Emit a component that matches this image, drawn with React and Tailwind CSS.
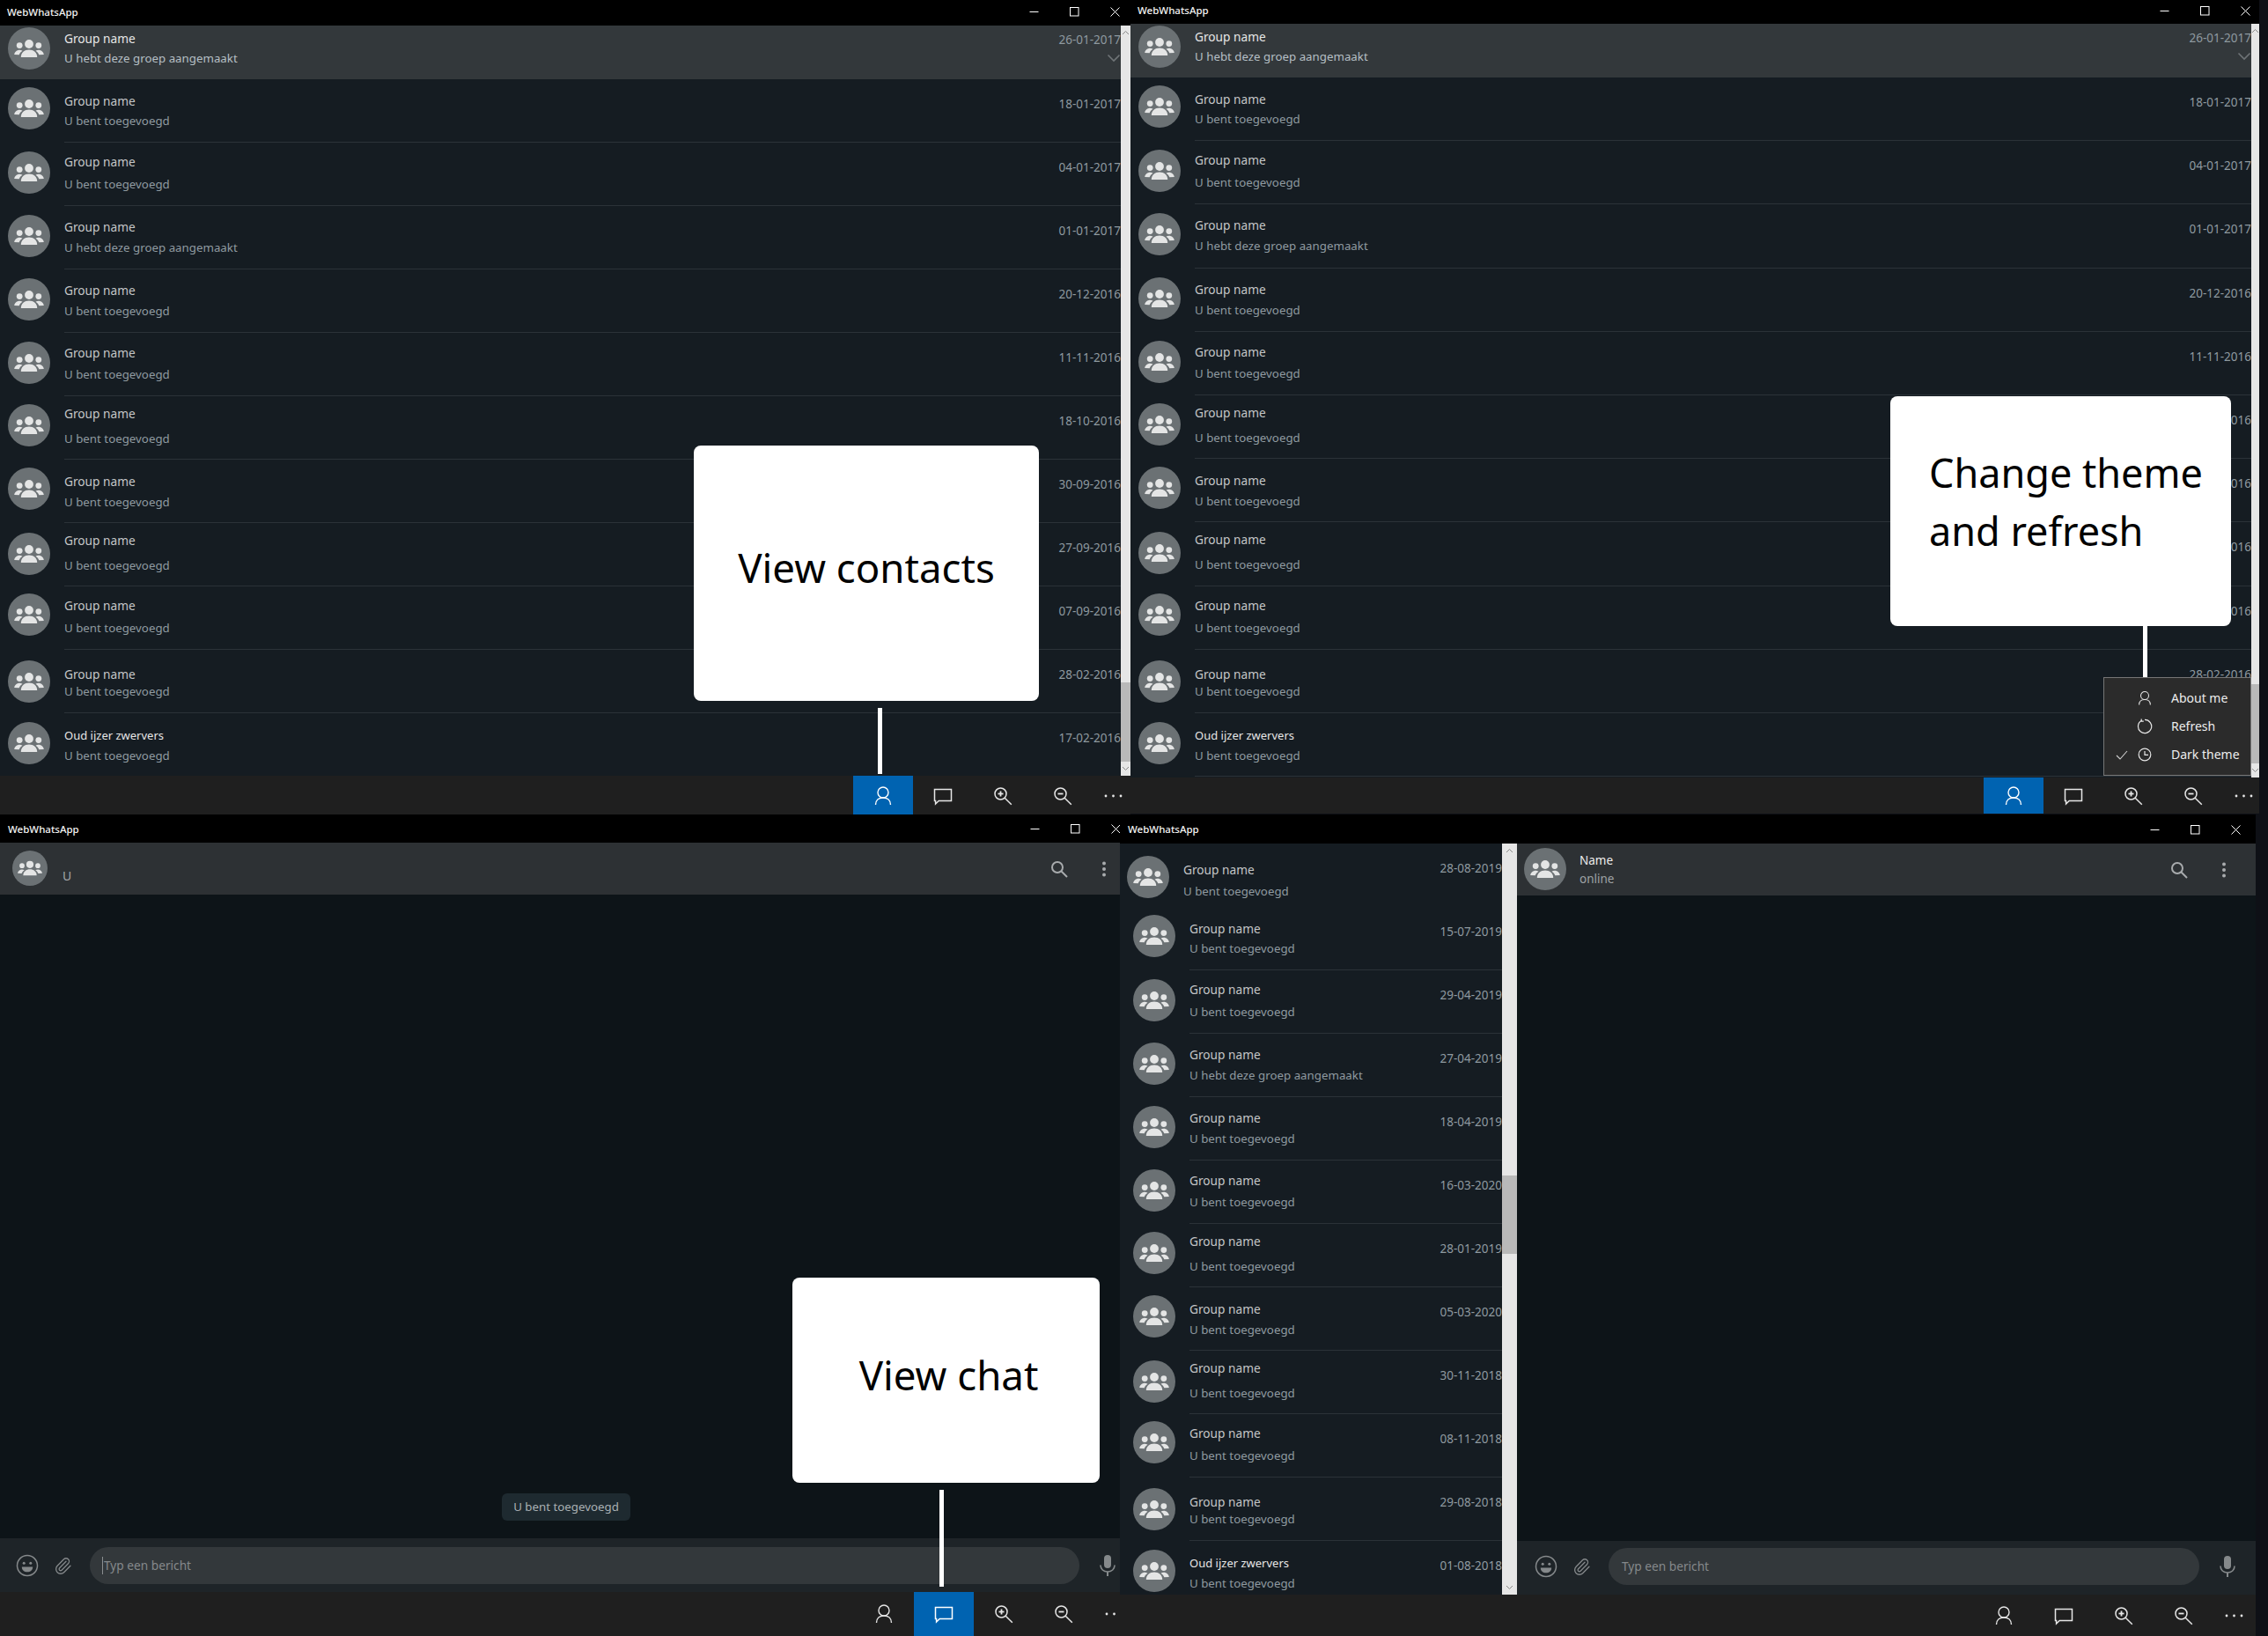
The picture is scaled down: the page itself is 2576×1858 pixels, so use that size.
import React from "react";
import { Paperclip } from "lucide-react";

const FONT = "[font-family:'Noto_Sans','Open_Sans',sans-serif]";

function GroupAvatar({ className = "w-12 h-12" }) {
  return (
    <svg viewBox="0 0 48 48" className={`shrink-0 ${className}`}>
      <circle cx="24" cy="24" r="24" fill="#6b7174" />
      <circle cx="24" cy="19" r="4.9" fill="#e4e5e5" />
      <circle cx="13.2" cy="20.6" r="3.4" fill="#e4e5e5" />
      <circle cx="34.8" cy="20.6" r="3.4" fill="#e4e5e5" />
      <path d="M14.8 34c0-5.2 4-8.4 9.2-8.4s9.2 3.2 9.2 8.4z" fill="#e4e5e5" />
      <path d="M7.2 31c.5-3 3-5.2 6-5.2 1.3 0 2.4.3 3.3.9-1.9 1.1-3.2 2.6-3.8 4.6z" fill="#e4e5e5" />
      <path d="M40.8 31c-.5-3-3-5.2-6-5.2-1.3 0-2.4.3-3.3.9 1.9 1.1 3.2 2.6 3.8 4.6z" fill="#e4e5e5" />
    </svg>
  );
}

function WinControls({ className }) {
  const cell = "w-[46px] flex justify-center shrink-0";
  return (
    <div className={`flex items-center ${className}`}>
      <div className={cell}>
        <svg width="11" height="11" viewBox="0 0 11 11"><path d="M0.5 5.5h10" stroke="#fff" strokeWidth="1" /></svg>
      </div>
      <div className={cell}>
        <svg width="11" height="11" viewBox="0 0 11 11"><rect x="0.5" y="0.5" width="9.5" height="9.5" fill="none" stroke="#fff" strokeWidth="1" /></svg>
      </div>
      <div className={cell}>
        <svg width="11" height="11" viewBox="0 0 11 11"><path d="M.5.5l10 10M10.5.5l-10 10" stroke="#fff" strokeWidth="1" /></svg>
      </div>
    </div>
  );
}

function TitleBar({ h, pad, ctl }) {
  return (
    <div className={`flex items-center justify-between bg-black shrink-0 ${h}`}>
      <span className={`text-[11.5px] font-medium leading-none text-[#f2f2f2] ${pad}`}>WebWhatsApp</span>
      <WinControls className={ctl} />
    </div>
  );
}

const IPerson = ({ c = "#e6e6e6", s = 24 }) => (
  <svg width={s} height={s} viewBox="0 0 24 24" fill="none" stroke={c} strokeWidth="1.4">
    <circle cx="12" cy="8" r="6" />
    <path d="M3.5 22c0-5 3.5-8 8.5-8s8.5 3 8.5 8" />
  </svg>
);
const IChat = ({ c = "#e6e6e6" }) => (
  <svg width="24" height="24" viewBox="0 0 24 24" fill="none" stroke={c} strokeWidth="1.5">
    <path d="M2.5 4.5H21.5V17.5H7.2L3.6 21V17.5H2.5Z" />
  </svg>
);
const IZoom = ({ plus }) => (
  <svg width="22" height="22" viewBox="0 0 22 22" fill="none" stroke="#e6e6e6" strokeWidth="1.5">
    <circle cx="8.5" cy="8.5" r="6.5" />
    <path d="M13.2 13.2l7.6 7.6" />
    <path d="M5.5 8.5h6" strokeWidth="1.8" />
    {plus && <path d="M8.5 5.5v6" strokeWidth="1.8" />}
  </svg>
);
const IDots = () => (
  <svg width="26" height="4" viewBox="0 0 26 4" fill="#e6e6e6" className="shrink-0">
    <circle cx="3" cy="2" r="1.4" /><circle cx="11.5" cy="2" r="1.4" /><circle cx="20" cy="2" r="1.4" />
  </svg>
);

function Toolbar({ active, h, pad = "pl-[969px]", inner = "" }) {
  const cell = `w-[68px] h-full flex items-center justify-center shrink-0 ${inner}`;
  return (
    <div className={`flex bg-[#1f1f1f] shrink-0 overflow-hidden ${h} ${pad}`}>
      <div className={`${cell} ${active === "person" ? "bg-[#0063b1]" : ""}`}>
        <IPerson c={active === "person" ? "#ffffff" : "#e6e6e6"} />
      </div>
      <div className={`${cell} ${active === "chat" ? "bg-[#0063b1]" : ""}`}>
        <IChat c={active === "chat" ? "#ffffff" : "#e6e6e6"} />
      </div>
      <div className={cell}><IZoom plus /></div>
      <div className={cell}><IZoom /></div>
      <div className={`w-[47px] h-full flex items-center pl-[12px] shrink-0 ${inner}`}><IDots /></div>
    </div>
  );
}

const J = [
  { a: "mt-[9px]", n: "mt-[15px]", s: "mt-[2px]" },
  { a: "mt-[10px]", n: "mt-[12px]", s: "mt-[5px]" },
  { a: "mt-[10px]", n: "mt-[14px]", s: "mt-[3px]" },
  { a: "mt-[10px]", n: "mt-[14px]", s: "mt-[3px]" },
  { a: "mt-[10px]", n: "mt-[13px]", s: "mt-[4px]" },
  { a: "mt-[9px]", n: "mt-[10px]", s: "mt-[8px]" },
  { a: "mt-[9px]", n: "mt-[15px]", s: "mt-[3px]" },
  { a: "mt-[11px]", n: "mt-[10px]", s: "mt-[8px]" },
  { a: "mt-[8px]", n: "mt-[12px]", s: "mt-[5px]" },
  { a: "mt-[12px]", n: "mt-[18px]", s: "mt-[-1px]" },
  { a: "mt-[10px]", n: "mt-[15px]", s: "mt-[3px]" },
];

const HEBT = "U hebt deze groep aangemaakt";
const TOE = "U bent toegevoegd";

function Row({ name, sub, date, j, rowH, pl, bright }) {
  return (
    <div className={`flex shrink-0 ${rowH} ${pl}`}>
      <GroupAvatar className={`w-12 h-12 ${j.a}`} />
      <div className="flex-1 min-w-0 ml-4 flex justify-between border-b border-[#2b3238] overflow-hidden">
        <div className="flex flex-col whitespace-nowrap">
          <span className={`${j.n} h-5 leading-5 ${bright ? "text-[13px] text-[#e6e6e6]" : "text-[13.7px] text-[#c4c6c7]"}`}>{name}</span>
          <span className={`${j.s} h-5 leading-5 text-[13.3px] text-[#8f9aa0]`}>{sub}</span>
        </div>
        <span className="mt-[18px] h-5 leading-5 text-[13.5px] text-[#8f9aa0] whitespace-nowrap">{date}</span>
      </div>
    </div>
  );
}

function ChevUp() {
  return (
    <svg width="9" height="6" viewBox="0 0 9 6" fill="none" stroke="#8a8a8a" strokeWidth="1"><path d="M1 5l3.5-3.5L8 5" /></svg>
  );
}
function ChevDown() {
  return (
    <svg width="9" height="6" viewBox="0 0 9 6" fill="none" stroke="#8a8a8a" strokeWidth="1"><path d="M1 1l3.5 3.5L8 1" /></svg>
  );
}

function Scrollbar({ w, thumbTop, thumbH }) {
  return (
    <div className={`flex flex-col items-center bg-[#e6e6e6] shrink-0 ${w}`}>
      <div className="h-[16px] flex items-center justify-center shrink-0"><ChevUp /></div>
      <div className="flex-1 w-full">
        <div className={`w-full bg-[#b9b9b9] ${thumbTop} ${thumbH}`} />
      </div>
      <div className="h-[16px] flex items-center justify-center shrink-0"><ChevDown /></div>
    </div>
  );
}

const DATES_A = ["18-01-2017", "04-01-2017", "01-01-2017", "20-12-2016", "11-11-2016", "18-10-2016", "30-09-2016", "27-09-2016", "07-09-2016", "28-02-2016", "17-02-2016"];
const DATES_B = ["15-07-2019", "29-04-2019", "27-04-2019", "18-04-2019", "16-03-2020", "28-01-2019", "05-03-2020", "30-11-2018", "08-11-2018", "29-08-2018", "01-08-2018"];
const subFor = (i) => (i === 2 ? HEBT : TOE);
const nameFor = (i) => (i === 10 ? "Oud ijzer zwervers" : "Group name");

function TopList({ rowH }) {
  return (
    <div className="flex-1 min-w-0 flex flex-col overflow-hidden bg-[#151c22]">
      <div className="flex h-[61px] shrink-0 pl-[9px] bg-[#33383b]">
        <GroupAvatar className="w-12 h-12 mt-[2px]" />
        <div className="flex-1 min-w-0 ml-4 flex justify-between overflow-hidden">
          <div className="flex flex-col whitespace-nowrap">
            <span className="mt-[5px] h-5 leading-5 text-[13.7px] text-[#e6e6e6]">Group name</span>
            <span className="mt-[2px] h-5 leading-5 text-[13.3px] text-[#b5bfc4]">{HEBT}</span>
          </div>
          <div className="flex flex-col items-end">
            <span className="mt-[6px] h-5 leading-5 text-[13.5px] text-[#8f9aa0] whitespace-nowrap">26-01-2017</span>
            <svg width="16" height="10" viewBox="0 0 16 10" fill="none" stroke="#6f7477" strokeWidth="1.6" className="mt-[6px]"><path d="M1.5 1.5L8 8l6.5-6.5" /></svg>
          </div>
        </div>
      </div>
      {DATES_A.map((d, i) => (
        <Row key={i} name={nameFor(i)} sub={subFor(i)} date={d} j={J[i]} rowH={rowH} pl="pl-[9px]" bright={i === 10} />
      ))}
    </div>
  );
}

const Callout = ({ className, children }) => (
  <div className={`absolute bg-white rounded-[8px] flex text-black ${className}`}>{children}</div>
);
const Connector = ({ className }) => <div className={`absolute bg-white ${className}`} />;

function IRefresh() {
  return (
    <svg width="18" height="18" viewBox="0 0 18 18" fill="none" stroke="#e6e6e6" strokeWidth="1.2">
      <path d="M5.5 2.3A7.6 7.6 0 1 0 9 1.4" />
      <path d="M5.2 0.6v2.6h2.6" />
    </svg>
  );
}
function IClock() {
  return (
    <svg width="16" height="16" viewBox="0 0 16 16" fill="none" stroke="#e6e6e6" strokeWidth="1.2">
      <circle cx="8" cy="8" r="6.8" />
      <path d="M8 4v4.4h4" />
    </svg>
  );
}

function MenuRow({ icon, label, check }) {
  return (
    <div className="flex items-center h-[32px]">
      <div className="w-[34px] flex justify-end pr-[7px]">
        {check && (
          <svg width="14" height="11" viewBox="0 0 14 11" fill="none" stroke="#d0d0d0" strokeWidth="1.1"><path d="M1 6l4 4 8-9" /></svg>
        )}
      </div>
      <div className="w-[24px] flex justify-center">{icon}</div>
      <span className="ml-[18px] text-[14px] leading-none text-[#ededed] whitespace-nowrap">{label}</span>
    </div>
  );
}

function Emoji() {
  return (
    <svg width="26" height="26" viewBox="0 0 26 26" fill="none" stroke="#85898b" strokeWidth="1.5" className="shrink-0">
      <circle cx="13" cy="13" r="11.5" />
      <circle cx="9.2" cy="10.2" r="1.5" fill="#85898b" stroke="none" />
      <circle cx="16.8" cy="10.2" r="1.5" fill="#85898b" stroke="none" />
      <path d="M6.8 14.5h12.4c0 3.6-2.7 5.8-6.2 5.8s-6.2-2.2-6.2-5.8z" fill="#85898b" stroke="none" />
    </svg>
  );
}
function Mic() {
  return (
    <svg width="20" height="26" viewBox="0 0 20 26" fill="none" className="shrink-0">
      <rect x="6" y="1" width="8" height="15" rx="4" fill="#85898b" />
      <path d="M2 12.5c0 4.6 3.4 7.5 8 7.5s8-2.9 8-7.5" stroke="#85898b" strokeWidth="1.6" />
      <path d="M10 20v5" stroke="#85898b" strokeWidth="2" />
    </svg>
  );
}

function InputBar({ className, left, clip, caret, phPad, micClass }) {
  return (
    <div className={`flex items-center bg-[#1e2428] shrink-0 ${className}`}>
      <div className={`flex items-center shrink-0 ${left}`}>
        <Emoji />
        <Paperclip size={21} color="#85898b" strokeWidth={1.5} className={clip} />
      </div>
      <div className={`flex-1 h-[42px] rounded-[21px] bg-[#33383b] flex items-center ${phPad}`}>
        {caret && <span className="w-px h-[20px] bg-[#8a8e90] mr-[1px]" />}
        <span className="text-[13.7px] text-[#85898b] leading-none">Typ een bericht</span>
      </div>
      <div className={micClass}><Mic /></div>
    </div>
  );
}

function ISearch() {
  return (
    <svg width="20" height="20" viewBox="0 0 20 20" fill="none" stroke="#a8abad" strokeWidth="2" className="shrink-0">
      <circle cx="8" cy="8" r="6" />
      <path d="M12.5 12.5L19 19" />
    </svg>
  );
}
function IKebab() {
  return (
    <svg width="6" height="18" viewBox="0 0 6 18" fill="#a8abad" className="shrink-0">
      <circle cx="3" cy="2.5" r="2" /><circle cx="3" cy="9" r="2" /><circle cx="3" cy="15.5" r="2" />
    </svg>
  );
}

function WindowOne() {
  return (
    <section className="relative w-[1284px] h-[925px] flex flex-col shrink-0">
      <TitleBar h="h-[29px] pb-[2px]" pad="pl-2" ctl="mr-[-5px]" />
      <div className="flex-1 min-h-0 flex">
        <TopList rowH="h-[72px]" />
        <Scrollbar w="w-[11px]" thumbTop="mt-[730px]" thumbH="h-[90px]" />
      </div>
      <Toolbar active="person" h="h-[44px]" inner="pt-[2px]" />
      <Callout className="left-[788px] top-[506px] w-[392px] h-[290px] items-center justify-center pb-[12px]">
        <span className="text-[45.6px] leading-none whitespace-nowrap">View contacts</span>
      </Callout>
      <Connector className="left-[997px] top-[804px] w-[5px] h-[75px]" />
    </section>
  );
}

function WindowTwo() {
  return (
    <section className="relative w-[1282px] h-[924px] flex flex-col shrink-0">
      <TitleBar h="h-[27px] pb-[3px]" pad="pl-2" ctl="mr-[-7px]" />
      <div className="flex-1 min-h-0 flex">
        <TopList rowH="h-[72.2px]" />
        <Scrollbar w="w-[9px]" thumbTop="mt-[734px]" thumbH="h-[90px]" />
      </div>
      <Toolbar active="person" h="h-[41px]" />
      <Callout className="left-[863px] top-[450px] w-[387px] h-[261px] flex-col justify-center pl-[44px] pb-[22px]">
        <span className="text-[45px] leading-[66px] whitespace-nowrap">Change theme</span>
        <span className="text-[45px] leading-[66px] whitespace-nowrap">and refresh</span>
      </Callout>
      <Connector className="left-[1150px] top-[711px] w-[5px] h-[58px]" />
      <div className="absolute left-[1105px] top-[769px] w-[168px] h-[112px] bg-[#2b2b2b] border border-[#767676] py-[7px]">
        <MenuRow icon={<IPerson c="#e6e6e6" s={18} />} label="About me" />
        <MenuRow icon={<IRefresh />} label="Refresh" />
        <MenuRow icon={<IClock />} label="Dark theme" check />
      </div>
    </section>
  );
}

function WindowThree() {
  return (
    <section className="relative w-[1272px] h-[933px] flex flex-col shrink-0 overflow-hidden">
      <TitleBar h="h-[32px] pt-[1px]" pad="pl-[9px]" ctl="mr-[-18px]" />
      <header className="flex items-center h-[59px] bg-[#2d3134] shrink-0 pl-[14px] pr-[15px]">
        <GroupAvatar className="w-10 h-10 mb-[1px]" />
        <span className="ml-[17px] mt-[16px] text-[14px] leading-none text-[#a3a6a8]">U</span>
        <div className="ml-auto flex items-center">
          <ISearch />
          <div className="ml-[38px]"><IKebab /></div>
        </div>
      </header>
      <div className="flex-1 min-h-0 bg-[#0d1418]" />
      <InputBar className="h-[61px] pt-[1px]" left="pl-[18px] w-[102px]" clip="ml-[17px]" caret phPad="pl-[14px]" micClass="ml-[22px] mr-[4px]" />
      <Toolbar active="chat" h="h-[50px]" pad="pl-[970px]" />
      <Callout className="left-[900px] top-[526px] w-[349px] h-[233px] items-center justify-center pb-[12px] pl-[6px]">
        <span className="text-[45.6px] leading-none whitespace-nowrap">View chat</span>
      </Callout>
      <div className="absolute left-[570px] top-[771px] w-[146px] h-[31px] rounded-[6px] bg-[#1e2a30] flex items-center justify-center">
        <span className="text-[13.3px] text-[#a9b0b3] whitespace-nowrap">U bent toegevoegd</span>
      </div>
      <Connector className="left-[1067px] top-[767px] w-[5px] h-[110px]" />
    </section>
  );
}

function WindowFour() {
  return (
    <section className="relative w-[1290px] h-[933px] flex flex-col shrink-0 overflow-hidden">
      <TitleBar h="h-[33px] pt-[1px]" pad="pl-[9px]" ctl="mr-0" />
      <div className="flex-1 min-h-0 flex">
        <div className="w-[434px] shrink-0 flex flex-col overflow-hidden bg-[#151c22]">
          <div className="flex h-[72px] shrink-0 pl-2">
            <GroupAvatar className="w-12 h-12 mt-[14px]" />
            <div className="flex-1 min-w-0 ml-4 flex justify-between overflow-hidden">
              <div className="flex flex-col whitespace-nowrap">
                <span className="mt-[20px] h-5 leading-5 text-[13.7px] text-[#c4c6c7]">Group name</span>
                <span className="mt-[4px] h-5 leading-5 text-[13.3px] text-[#8f9aa0]">{TOE}</span>
              </div>
              <span className="mt-[18px] h-5 leading-5 text-[13.5px] text-[#8f9aa0] whitespace-nowrap">28-08-2019</span>
            </div>
          </div>
          {DATES_B.map((d, i) => (
            <Row key={i} name={nameFor(i)} sub={subFor(i)} date={d} j={J[i]} rowH="h-[72px]" pl="pl-[15px]" bright={i === 10} />
          ))}
        </div>
        <Scrollbar w="w-[17px]" thumbTop="mt-[361px]" thumbH="h-[89px]" />
        <div className="flex-1 min-w-0 flex flex-col">
          <header className="flex items-center h-[59px] bg-[#2d3134] shrink-0 pl-2 pr-[33px]">
            <GroupAvatar className="w-12 h-12 mb-[1px]" />
            <div className="ml-[15px] flex flex-col pt-[1px]">
              <span className="text-[13.5px] leading-[21px] text-[#ededed]">Name</span>
              <span className="text-[13.5px] leading-[21px] text-[#9ea2a4]">online</span>
            </div>
            <div className="ml-auto flex items-center">
              <ISearch />
              <div className="ml-[38px]"><IKebab /></div>
            </div>
          </header>
          <div className="flex-1 min-h-0 bg-[#0d1418]" />
          <InputBar className="h-[61px] pb-[3px]" left="pl-5 w-[104px]" clip="ml-[17px]" phPad="pl-[15px]" micClass="ml-[22px] mr-[22px]" />
        </div>
      </div>
      <Toolbar active="" h="h-[47px]" pad="pl-[970px]" />
    </section>
  );
}

export default function App() {
  return (
    <div className={`w-[2576px] h-[1858px] overflow-hidden bg-[#0e1016] ${FONT}`}>
      <div className="flex h-[925px]">
        <WindowOne />
        <WindowTwo />
      </div>
      <div className="flex h-[933px]">
        <WindowThree />
        <WindowFour />
      </div>
    </div>
  );
}
